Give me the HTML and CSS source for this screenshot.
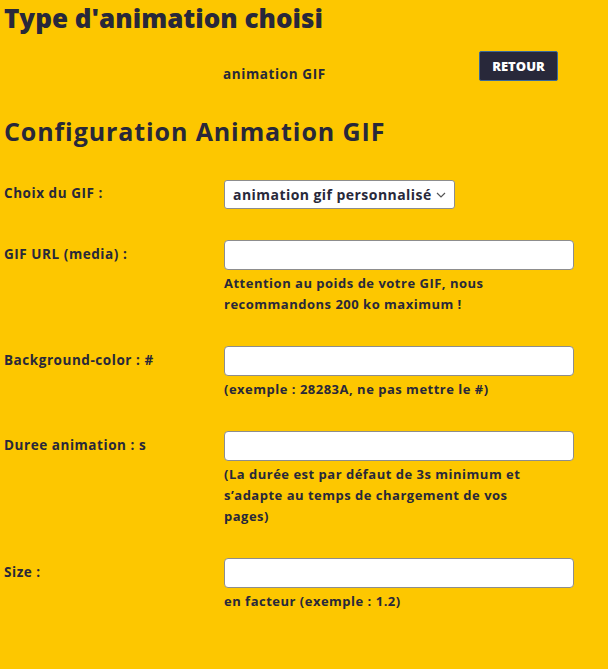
FILE: index.html
```html
<!DOCTYPE html>
<html lang="fr">
<head>
<meta charset="utf-8">
<title>Configuration Animation GIF</title>
<link rel="stylesheet" href="styles.css">
</head>
<body>
<main class="page">
  <h1 class="title">Type d'animation choisi</h1>
  <div class="chosen">
    <span class="chosen-name">animation GIF</span>
    <button class="btn-back" type="button">RETOUR</button>
  </div>
  <h2 class="section-title">Configuration Animation GIF</h2>
  <form class="config">
    <div class="field field-select">
      <label class="field-label" for="gif">Choix du GIF :</label>
      <div class="field-control">
        <div class="select-wrap">
          <select class="select" id="gif"><option>animation gif personnalisé</option></select>
          <svg class="chevron" width="10" height="6" viewBox="0 0 10 6"><path d="M1 1l4 4 4-4" fill="none" stroke="#555" stroke-width="1.2"/></svg>
        </div>
      </div>
    </div>
    <div class="field">
      <label class="field-label" for="url">GIF URL (media) :</label>
      <div class="field-control">
        <input class="input" id="url" type="text">
        <p class="help">Attention au poids de votre GIF, nous<br>recommandons 200 ko maximum !</p>
      </div>
    </div>
    <div class="field">
      <label class="field-label" for="bg">Background-color : #</label>
      <div class="field-control">
        <input class="input" id="bg" type="text">
        <p class="help">(exemple : 28283A, ne pas mettre le #)</p>
      </div>
    </div>
    <div class="field">
      <label class="field-label" for="dur">Duree animation : s</label>
      <div class="field-control">
        <input class="input" id="dur" type="text">
        <p class="help">(La durée est par défaut de 3s minimum et<br>s’adapte au temps de chargement de vos<br>pages)</p>
      </div>
    </div>
    <div class="field">
      <label class="field-label" for="size">Size :</label>
      <div class="field-control">
        <input class="input" id="size" type="text">
        <p class="help">en facteur (exemple : 1.2)</p>
      </div>
    </div>
  </form>
</main>
</body>
</html>
```
FILE: styles.css
```css
* { box-sizing: border-box; }
html, body {
  margin: 0;
  padding: 0;
  background: #fdc700;
}
body {
  color: #28283a;
  font-family: "Open Sans", "Noto Sans", sans-serif;
  font-weight: 700;
  font-size: 13px;
}
.page {
  padding: 2px 4px 60px;
}
.title {
  margin: 0;
  font-size: 26px;
  line-height: 32px;
  font-weight: 800;
}
.chosen {
  display: flex;
  align-items: flex-start;
  margin-top: 17px;
  height: 30px;
}
.chosen-name {
  margin-left: 219px;
  margin-top: 13px;
  line-height: 20px;
  width: 256px;
  font-size: 13.5px;
  letter-spacing: 0.6px;
}
.btn-back {
  width: 79px;
  height: 30px;
  background: #28283a;
  color: #fff;
  border: 1px solid #3b6a9a;
  border-radius: 2px;
  font-family: inherit;
  font-weight: 800;
  font-size: 13px;
  padding: 0;
}
.section-title {
  margin: 33px 0 0;
  font-size: 25px;
  line-height: 34px;
  font-weight: 700;
  letter-spacing: 0.9px;
}
.config {
  margin-top: 32px;
  display: flex;
  flex-direction: column;
  gap: 31px;
}
.field {
  display: grid;
  grid-template-columns: 220px 350px;
  align-items: start;
}
.field-label {
  line-height: 28px;
  font-size: 13.5px;
  letter-spacing: 0.55px;
}
.field-select .field-label { line-height: 27px; }
.select-wrap {
  position: relative;
  width: 231px;
}
.select {
  appearance: none;
  -webkit-appearance: none;
  width: 231px;
  height: 29px;
  padding: 0 0 0 8px;
  background: #fff;
  border: 1px solid #8d8d8d;
  border-radius: 3px;
  font-family: inherit;
  font-weight: 700;
  font-size: 14px;
  letter-spacing: 0.45px;
  color: #28283a;
}
.chevron {
  position: absolute;
  right: 9px;
  top: 12px;
}
.input {
  display: block;
  width: 350px;
  height: 30px;
  background: #fff;
  border: 1px solid #8d8d8d;
  border-radius: 4px;
}
.help {
  margin: 3px 0 0;
  line-height: 21px;
  letter-spacing: 0.5px;
}
```
